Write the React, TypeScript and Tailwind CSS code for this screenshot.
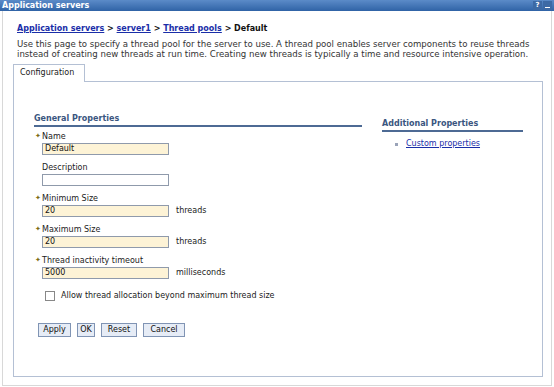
import React from "react";

const Field = ({
  label,
  value,
  required,
  unit,
  yellow = true,
  className = "",
}: {
  label: string;
  value: string;
  required?: boolean;
  unit?: string;
  yellow?: boolean;
  className?: string;
}) => (
  <div className={"flex flex-col " + className}>
    <div className="flex items-center h-[10px] relative">
      {required && (
        <span className="absolute -left-[7px] top-[1px] text-[#7d6c14] text-[7px] leading-none">✦</span>
      )}
      <span className="text-[8px] leading-none text-[#222]">{label}</span>
    </div>
    <div className="flex items-center mt-[1px] h-[12px]">
      <div
        className={
          "w-[127px] h-[12px] border border-[#8f9aab] text-[8px] leading-[10px] pl-[2px] text-[#111] " +
          (yellow ? "bg-[#fdf3d6]" : "bg-white")
        }
      >
        {value}
      </div>
      {unit && <span className="ml-[7px] text-[8px] leading-none text-[#222]">{unit}</span>}
    </div>
  </div>
);

const Btn = ({ children, w }: { children: React.ReactNode; w: string }) => (
  <div
    className={
      "h-[14px] border border-[#8094b4] bg-[#e6ecf6] text-[8px] leading-[12px] text-center text-[#111] " + w
    }
  >
    {children}
  </div>
);

export default function App() {
  return (
    <div
      className="w-[554px] h-[387px] bg-white overflow-hidden flex flex-col"
      style={{ fontFamily: '"DejaVu Sans", Verdana, sans-serif' }}
    >
      {/* title bar */}
      <div className="h-[11px] bg-gradient-to-b from-[#5b8bc8] to-[#2f63a6] flex items-center justify-between pl-[2px] pr-[2px] shrink-0">
        <span className="text-white font-bold text-[8px] leading-none">Application servers</span>
        <div className="flex gap-[1px]">
          <div className="w-[9px] h-[9px] bg-[#3d6aa5] text-white text-[7px] leading-[9px] text-center font-bold">?</div>
          <div className="w-[9px] h-[9px] bg-[#3d6aa5] flex items-end justify-center pb-[2px]">
            <div className="w-[5px] h-[1px] bg-white" />
          </div>
        </div>
      </div>

      <div className="flex-1 mx-[2px] mb-[1px] border-x border-b border-[#d8d8d8] flex flex-col">
        {/* breadcrumb */}
        <div className="mt-[14px] ml-[14px] text-[8px] font-bold leading-none text-[#111]">
          <a className="text-[#1a2ea8] underline">Application servers</a> &gt;{" "}
          <a className="text-[#1a2ea8] underline">server1</a> &gt;{" "}
          <a className="text-[#1a2ea8] underline">Thread pools</a> &gt; Default
        </div>
        <p className="mt-[6px] ml-[14px] mr-[10px] text-[8.6px] leading-[10px] text-[#333]">
          Use this page to specify a thread pool for the server to use. A thread pool enables server components to reuse threads
          instead of creating new threads at run time. Creating new threads is typically a time and resource intensive operation.
        </p>

        {/* tab */}
        <div className="ml-[10px] mt-[5px] flex">
          <div className="w-[72px] h-[18px] border border-b-0 border-[#b4c0d4] bg-white text-[8px] leading-[16px] pl-[6px] text-[#222] relative z-10 -mb-px">
            Configuration
          </div>
        </div>
        <div className="ml-[10px] w-[530px] h-[296px] border border-[#b4c0d4] flex">
          {/* left column */}
          <div className="ml-[20px] w-[328px] flex flex-col">
            <div className="mt-[33px] text-[8px] font-bold text-[#3a5680] leading-none pb-[2px] border-b-2 border-[#4d6a94]">
              General Properties
            </div>
            <div className="ml-[8px] flex flex-col">
              <Field className="mt-[5px]" label="Name" value="Default" required />
              <Field className="mt-[8px]" label="Description" value="" yellow={false} />
              <Field className="mt-[8px]" label="Minimum Size" value="20" required unit="threads" />
              <Field className="mt-[8px]" label="Maximum Size" value="20" required unit="threads" />
              <Field className="mt-[8px]" label="Thread inactivity timeout" value="5000" required unit="milliseconds" />
              <div className="flex items-center mt-[12px] ml-[3px]">
                <div className="w-[10px] h-[10px] border border-[#888] bg-white" />
                <span className="ml-[6px] text-[8px] leading-none text-[#222]">Allow thread allocation beyond maximum thread size</span>
              </div>
              <div className="flex gap-[6px] mt-[22px] -ml-[4px]">
                <Btn w="w-[33px]">Apply</Btn>
                <Btn w="w-[18px]">OK</Btn>
                <Btn w="w-[36px]">Reset</Btn>
                <Btn w="w-[42px]">Cancel</Btn>
              </div>
            </div>
          </div>
          {/* right column */}
          <div className="ml-[20px] w-[141px] flex flex-col">
            <div className="mt-[38px] text-[8px] font-bold text-[#3a5680] leading-none pb-[2px] border-b-2 border-[#4d6a94]">
              Additional Properties
            </div>
            <div className="mt-[6px] ml-[13px] flex items-center">
              <div className="w-[3px] h-[3px] bg-[#9aa3b8]" />
              <a className="ml-[8px] text-[8px] text-[#1a2ea8] underline">Custom properties</a>
            </div>
          </div>
        </div>
      </div>
    </div>
  );
}
